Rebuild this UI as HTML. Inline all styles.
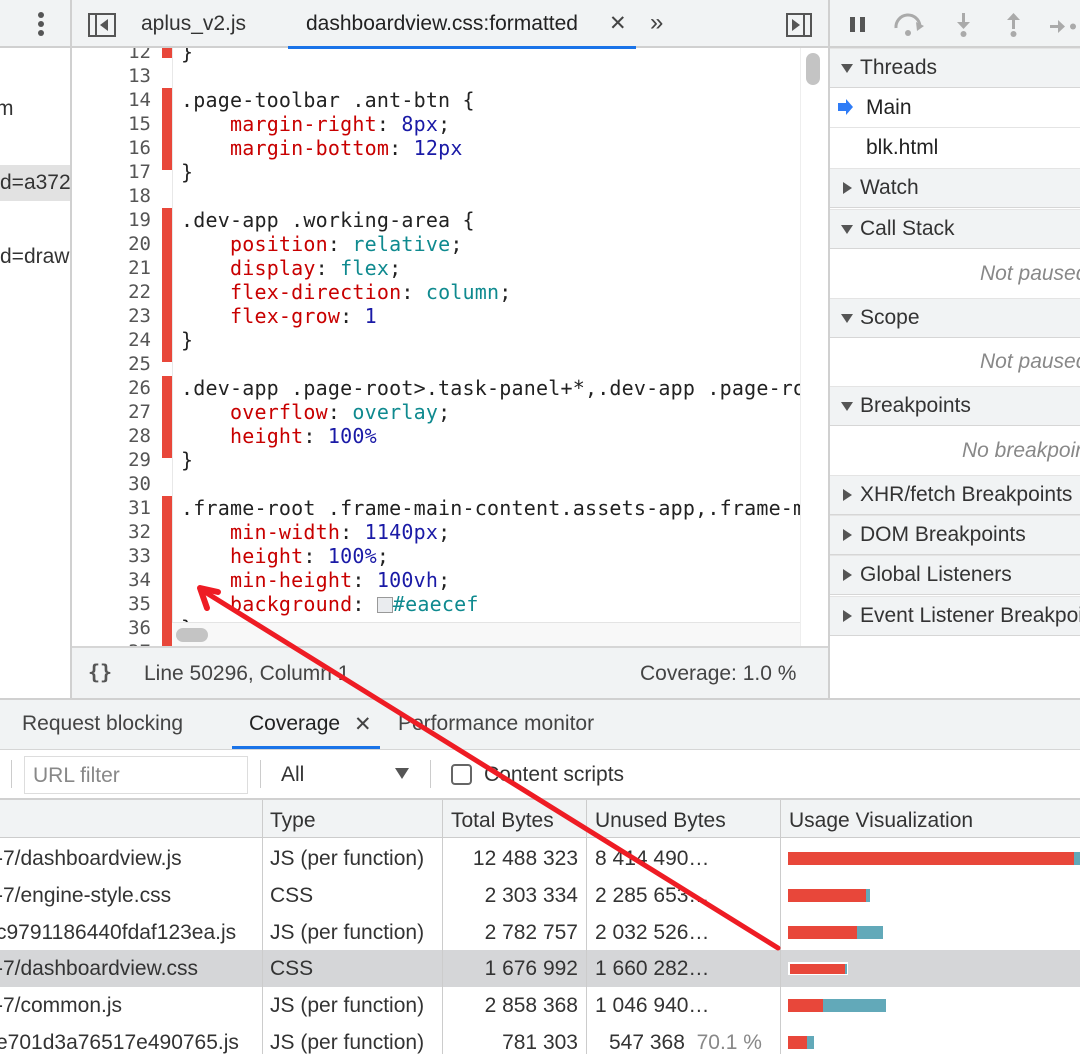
<!DOCTYPE html>
<html><head><meta charset="utf-8"><style>
*{margin:0;padding:0;box-sizing:border-box}
body{width:1080px;height:1054px;overflow:hidden;background:#fff;font-family:"Liberation Sans",Arial,sans-serif;color:#333;position:relative}
.a{position:absolute;white-space:nowrap}
.s{font-size:21px}
.code{font-family:"DejaVu Sans Mono","Liberation Mono",monospace;font-size:20px;letter-spacing:0.2px;line-height:24px;color:#222;white-space:pre}
.p{color:#c80000}.n{color:#1a1aa6}.k{color:#0f8a8f}
.ln{font-family:"DejaVu Sans Mono","Liberation Mono",monospace;font-size:19px;line-height:24px;color:#555;text-align:right;width:79px}
.sec{position:absolute;left:830px;width:250px;height:40px;background:#f1f3f4;border-bottom:1px solid #d6d6d6;border-top:1px solid #e4e4e4;font-size:21px;line-height:38px;color:#333;padding-left:30px;white-space:nowrap;overflow:hidden}
.sec:before{content:"";position:absolute;left:11px;top:15px;border-left:6px solid transparent;border-right:6px solid transparent;border-top:9px solid #555}
.sec.c:before{left:13px;top:13px;border-top:6px solid transparent;border-bottom:6px solid transparent;border-left:9px solid #555;border-right:0}
.row{position:absolute;left:0;width:1080px;height:37px;font-size:21px;line-height:37px}
.row span{position:absolute}
.bar{position:absolute;height:13px}
</style></head><body>
<div class="a" style="left:0;top:0;width:1080px;height:48px;background:#f1f3f4;border-bottom:2px solid #d0d0d0"></div>
<div class="a" style="left:38px;top:12px;width:6px;height:24px">
<div style="width:6px;height:6px;border-radius:3px;background:#555;margin-bottom:3px"></div><div style="width:6px;height:6px;border-radius:3px;background:#555;margin-bottom:3px"></div><div style="width:6px;height:6px;border-radius:3px;background:#555"></div></div>
<div class="a" style="left:70px;top:0;width:2px;height:698px;background:#d0d0d0"></div>
<div class="a" style="left:88px;top:13px;width:28px;height:24px;border:2px solid #555"><div style="position:absolute;left:5px;top:0;width:2px;height:20px;background:#555"></div><div style="position:absolute;left:10px;top:4px;border-top:6px solid transparent;border-bottom:6px solid transparent;border-right:8px solid #555"></div></div>
<div class="a s" style="left:141px;top:12px;color:#333">aplus_v2.js</div>
<div class="a s" style="left:306px;top:12px;color:#222">dashboardview.css:formatted</div>
<div class="a s" style="left:609px;top:11px;color:#444">✕</div>
<div class="a" style="left:288px;top:46px;width:348px;height:3px;background:#1a73e8"></div>
<div class="a s" style="left:650px;top:9px;color:#444;font-size:24px">»</div>
<div class="a" style="left:786px;top:13px;width:26px;height:24px;border:2px solid #555"><div style="position:absolute;right:5px;top:0;width:2px;height:20px;background:#555"></div><div style="position:absolute;left:4px;top:4px;border-top:6px solid transparent;border-bottom:6px solid transparent;border-left:8px solid #555"></div></div>
<div class="a" style="left:828px;top:0;width:2px;height:698px;background:#d0d0d0"></div>
<div class="a" style="left:850px;top:17px;width:5px;height:15px;background:#555"></div><div class="a" style="left:860px;top:17px;width:5px;height:15px;background:#555"></div>
<svg class="a" style="left:890px;top:10px" width="190" height="30"><g fill="#aaa" stroke="#aaa"><path d="M6 18 A12 12 0 0 1 30 16" fill="none" stroke-width="3"/><path d="M26 12 L34 16 L27 21Z" stroke="none"/><circle cx="18" cy="23" r="3" stroke="none"/>
<rect x="72" y="3" width="3" height="10" stroke="none"/><path d="M67 12 L80 12 L73.5 19Z" stroke="none"/><circle cx="73.5" cy="24" r="3" stroke="none"/>
<rect x="122" y="9" width="3" height="10" stroke="none"/><path d="M117 10 L130 10 L123.5 3Z" stroke="none"/><circle cx="123.5" cy="24" r="3" stroke="none"/>
<rect x="160" y="15" width="9" height="3" stroke="none"/><path d="M168 10 L175 16.5 L168 23Z" stroke="none"/><circle cx="183" cy="16.5" r="3" stroke="none"/></g></svg>
<div class="a s" style="left:-4px;top:97px">m</div>
<div class="a s" style="left:0;top:165px;width:70px;height:36px;background:#e2e2e2;line-height:36px;overflow:hidden">d=a372b</div>
<div class="a s" style="left:0;top:245px;width:70px;overflow:hidden">d=draw</div>
<div class="a" style="left:72px;top:48px;width:756px;height:600px;overflow:hidden">
<div class="a ln" style="left:0;top:-8px">12<br>13<br>14<br>15<br>16<br>17<br>18<br>19<br>20<br>21<br>22<br>23<br>24<br>25<br>26<br>27<br>28<br>29<br>30<br>31<br>32<br>33<br>34<br>35<br>36<br>37</div>
<div class="a" style="left:90px;top:0;width:10px;height:10px;background:#e8473a"></div>
<div class="a" style="left:90px;top:40px;width:10px;height:82px;background:#e8473a"></div>
<div class="a" style="left:90px;top:160px;width:10px;height:154px;background:#e8473a"></div>
<div class="a" style="left:90px;top:328px;width:10px;height:82px;background:#e8473a"></div>
<div class="a" style="left:90px;top:448px;width:10px;height:150px;background:#e8473a"></div>
<div class="a" style="left:100px;top:0;width:1px;height:600px;background:#e8e8e8"></div>
<div class="a code" style="left:109px;top:-8px">}

.page-toolbar .ant-btn {
    <span class="p">margin-right</span>: <span class="n">8px</span>;
    <span class="p">margin-bottom</span>: <span class="n">12px</span>
}

.dev-app .working-area {
    <span class="p">position</span>: <span class="k">relative</span>;
    <span class="p">display</span>: <span class="k">flex</span>;
    <span class="p">flex-direction</span>: <span class="k">column</span>;
    <span class="p">flex-grow</span>: <span class="n">1</span>
}

.dev-app .page-root&gt;.task-panel+*,.dev-app .page-root
    <span class="p">overflow</span>: <span class="k">overlay</span>;
    <span class="p">height</span>: <span class="n">100%</span>
}

.frame-root .frame-main-content.assets-app,.frame-main
    <span class="p">min-width</span>: <span class="n">1140px</span>;
    <span class="p">height</span>: <span class="n">100%</span>;
    <span class="p">min-height</span>: <span class="n">100vh</span>;
    <span class="p">background</span>: <span style="display:inline-block;width:16px;height:16px;border:1px solid #999;background:#eaecef;vertical-align:-2px"></span><span class="k">#eaecef</span>
}</div>
<div class="a" style="left:728px;top:0;width:28px;height:600px;background:#fff;border-left:1px solid #eee"></div>
<div class="a" style="left:734px;top:5px;width:14px;height:32px;border-radius:7px;background:#c4c4c4"></div>
<div class="a" style="left:100px;top:574px;width:628px;height:26px;background:#f8f8f8;border-top:1px solid #e4e4e4"></div>
<div class="a" style="left:104px;top:580px;width:32px;height:14px;border-radius:7px;background:#c4c4c4"></div>
</div>
<div class="a" style="left:72px;top:646px;width:756px;height:52px;background:#f1f3f4;border-top:2px solid #d6d6d6"></div>
<div class="a" style="left:88px;top:660px;font-family:'DejaVu Sans Mono',monospace;font-size:20px;font-weight:bold;color:#555">{}</div>
<div class="a s" style="left:144px;top:662px;color:#444">Line 50296, Column 1</div>
<div class="a s" style="left:640px;top:662px;color:#444">Coverage: 1.0 %</div>
<div class="sec" style="top:48px">Threads</div>
<div class="a" style="left:830px;top:88px;width:250px;height:80px;background:#fff"></div>
<svg class="a" style="left:838px;top:99px" width="16" height="18"><path d="M0 4 H8 V0 L15 8 L8 16 V12 H0Z" fill="#2f7cf6"/></svg>
<div class="a s" style="left:866px;top:96px;color:#222">Main</div>
<div class="a" style="left:830px;top:127px;width:250px;height:1px;background:#e4e4e4"></div>
<div class="a s" style="left:866px;top:136px;color:#222">blk.html</div>
<div class="sec c" style="top:168px">Watch</div>
<div class="sec" style="top:209px">Call Stack</div>
<div class="a s" style="left:980px;top:262px;color:#888;font-style:italic">Not paused</div>
<div class="sec" style="top:298px">Scope</div>
<div class="a s" style="left:980px;top:350px;color:#888;font-style:italic">Not paused</div>
<div class="sec" style="top:386px">Breakpoints</div>
<div class="a s" style="left:962px;top:439px;color:#888;font-style:italic">No breakpoints</div>
<div class="sec c" style="top:475px">XHR/fetch Breakpoints</div>
<div class="sec c" style="top:515px">DOM Breakpoints</div>
<div class="sec c" style="top:555px">Global Listeners</div>
<div class="sec c" style="top:596px">Event Listener Breakpoints</div>
<div class="a" style="left:0;top:698px;width:1080px;height:52px;background:#f1f3f4;border-top:2px solid #d0d0d0;border-bottom:1px solid #d6d6d6"></div>
<div class="a s" style="left:22px;top:712px;color:#444">Request blocking</div>
<div class="a s" style="left:249px;top:712px;color:#222">Coverage</div>
<div class="a s" style="left:354px;top:712px;color:#444">✕</div>
<div class="a" style="left:232px;top:746px;width:148px;height:3px;background:#1a73e8"></div>
<div class="a s" style="left:398px;top:712px;color:#444">Performance monitor</div>
<div class="a" style="left:11px;top:760px;width:1px;height:28px;background:#ccc"></div>
<div class="a" style="left:24px;top:756px;width:224px;height:38px;border:1px solid #ddd"></div>
<div class="a s" style="left:33px;top:764px;color:#888">URL filter</div>
<div class="a" style="left:260px;top:760px;width:1px;height:28px;background:#ccc"></div>
<div class="a s" style="left:281px;top:763px;color:#333">All</div>
<div class="a" style="left:395px;top:768px;border-left:7px solid transparent;border-right:7px solid transparent;border-top:11px solid #555"></div>
<div class="a" style="left:430px;top:760px;width:1px;height:28px;background:#ccc"></div>
<div class="a" style="left:451px;top:764px;width:21px;height:21px;border:2px solid #666;border-radius:4px"></div>
<div class="a s" style="left:484px;top:763px;color:#333">Content scripts</div>
<div class="a" style="left:0;top:798px;width:1080px;height:40px;background:#f1f3f4;border-top:2px solid #d0d0d0;border-bottom:1px solid #ccc"></div>
<div class="a s" style="left:270px;top:809px">Type</div>
<div class="a s" style="left:451px;top:809px">Total Bytes</div>
<div class="a s" style="left:595px;top:809px">Unused Bytes</div>
<div class="a s" style="left:789px;top:809px">Usage Visualization</div>
<div class="a" style="left:0;top:950px;width:1080px;height:37px;background:#d5d6d8"></div>
<div class="row" style="top:840px"><span style="left:-4px">-7/dashboardview.js</span><span style="left:270px">JS (per function)</span><span style="right:502px">12 488 323</span><span style="left:595px">8 414 490…</span></div>
<div class="row" style="top:877px"><span style="left:-4px">-7/engine-style.css</span><span style="left:270px">CSS</span><span style="right:502px">2 303 334</span><span style="left:595px">2 285 653…</span></div>
<div class="row" style="top:914px"><span style="left:-4px">c9791186440fdaf123ea.js</span><span style="left:270px">JS (per function)</span><span style="right:502px">2 782 757</span><span style="left:595px">2 032 526…</span></div>
<div class="row" style="top:950px"><span style="left:-4px">-7/dashboardview.css</span><span style="left:270px">CSS</span><span style="right:502px">1 676 992</span><span style="left:595px">1 660 282…</span></div>
<div class="row" style="top:987px"><span style="left:-4px">-7/common.js</span><span style="left:270px">JS (per function)</span><span style="right:502px">2 858 368</span><span style="left:595px">1 046 940…</span></div>
<div class="row" style="top:1024px"><span style="left:-4px">e701d3a76517e490765.js</span><span style="left:270px">JS (per function)</span><span style="right:502px">781 303</span><span style="left:609px">547 368 <span style="position:static;color:#888">&nbsp;70.1 %</span></span></div>
<div class="a" style="left:262px;top:800px;width:1px;height:254px;background:#ccc"></div>
<div class="a" style="left:442px;top:800px;width:1px;height:254px;background:#ccc"></div>
<div class="a" style="left:586px;top:800px;width:1px;height:254px;background:#ccc"></div>
<div class="a" style="left:780px;top:800px;width:1px;height:254px;background:#ccc"></div>
<div class="bar" style="left:788px;top:852px;width:286px;background:#e8473a"></div><div class="bar" style="left:1074px;top:852px;width:6px;background:#62a9b9"></div>
<div class="bar" style="left:788px;top:889px;width:78px;background:#e8473a"></div><div class="bar" style="left:866px;top:889px;width:4px;background:#62a9b9"></div>
<div class="bar" style="left:788px;top:926px;width:69px;background:#e8473a"></div><div class="bar" style="left:857px;top:926px;width:26px;background:#62a9b9"></div>
<div class="bar" style="left:788px;top:962px;width:60px;background:#fff"></div><div class="bar" style="left:790px;top:964px;width:55px;height:10px;background:#e8473a"></div><div class="bar" style="left:845px;top:964px;width:2px;height:10px;background:#62a9b9"></div>
<div class="bar" style="left:788px;top:999px;width:35px;background:#e8473a"></div><div class="bar" style="left:823px;top:999px;width:63px;background:#62a9b9"></div>
<div class="bar" style="left:788px;top:1036px;width:19px;background:#e8473a"></div><div class="bar" style="left:807px;top:1036px;width:7px;background:#62a9b9"></div>
<svg class="a" style="left:0;top:0" width="1080" height="1054"><line x1="778" y1="948" x2="205" y2="592" stroke="#ee1c24" stroke-width="5" stroke-linecap="round"/><path d="M218 592 L200 588 L207 608" stroke="#ee1c24" stroke-width="6" stroke-linecap="round" stroke-linejoin="round" fill="none"/></svg>
</body></html>
